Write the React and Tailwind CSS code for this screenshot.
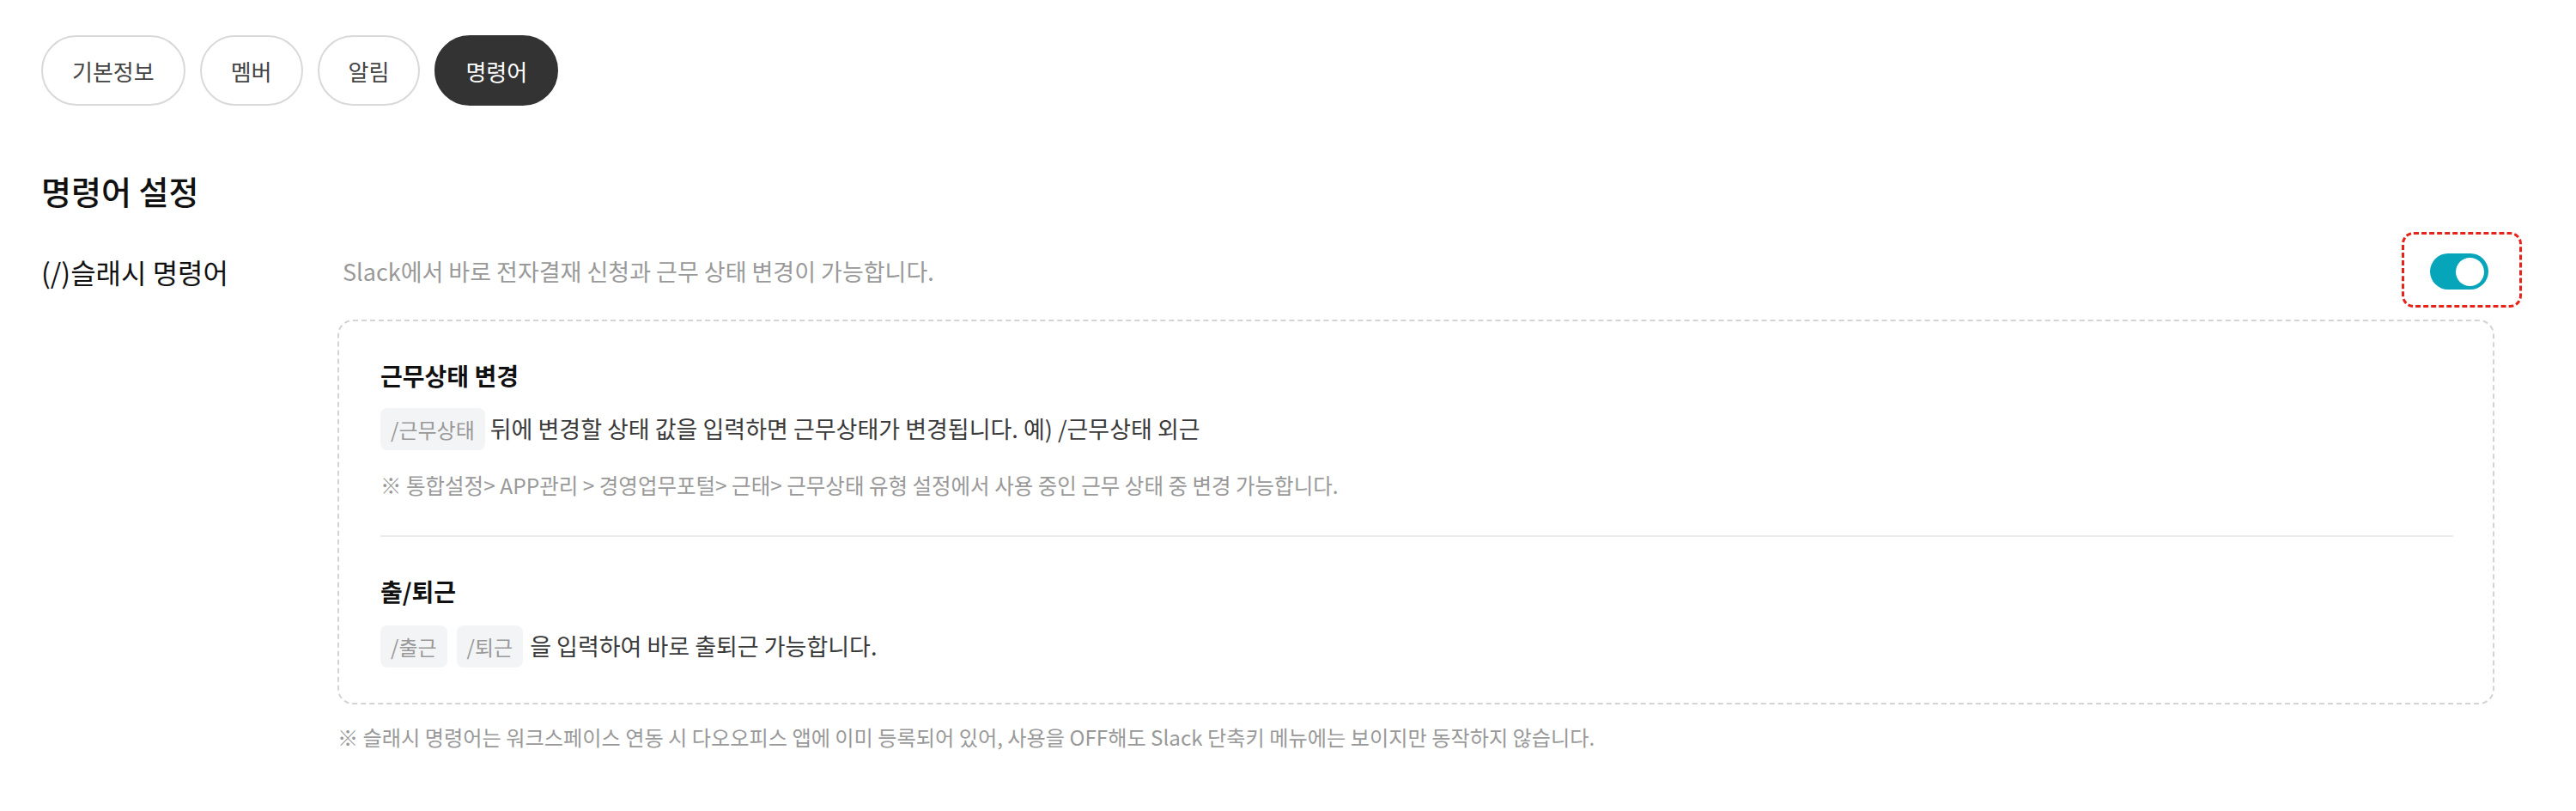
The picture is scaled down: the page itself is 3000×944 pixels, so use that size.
import React, { useState } from 'react'

const tabs = ['기본정보', '멤버', '알림', '명령어']

function Chip({ children }) {
  return (
    <span className="inline-flex h-[49px] items-center rounded-[8px] bg-[#f3f4f6] px-[12px] text-[24px] text-[#999]">
      {children}
    </span>
  )
}

export default function App() {
  const [active, setActive] = useState('명령어')
  const [enabled, setEnabled] = useState(true)

  return (
    <div
      className="min-h-[944px] bg-white pl-[48px] pr-[95px] pt-[41px] text-[#222]"
      style={{ fontFamily: '"Noto Sans CJK KR", "Noto Sans", sans-serif' }}
    >
      {/* Tabs */}
      <div className="flex gap-[17px]">
        {tabs.map((t) => (
          <button
            key={t}
            onClick={() => setActive(t)}
            className={
              t === active
                ? 'h-[82px] rounded-full border-2 border-[#333] bg-[#333] px-[34px] text-[26px] text-white'
                : 'h-[82px] rounded-full border-2 border-[#d9d9d9] bg-white px-[34px] text-[26px] text-[#444]'
            }
          >
            {t}
          </button>
        ))}
      </div>

      <h2 className="mt-[74px] text-[38px] font-medium leading-[50px] text-[#111]">명령어 설정</h2>

      {/* Slash command setting */}
      <div className="mt-[44px] grid grid-cols-[345px_1fr]">
        <div className="text-[32px] leading-[50px] text-[#111]">(/)슬래시 명령어</div>

        <div>
          <div className="flex h-[50px] items-center justify-between">
            <p className="pl-[6px] text-[27px] text-[#999]">
              Slack에서 바로 전자결재 신청과 근무 상태 변경이 가능합니다.
            </p>
            <div className="relative mr-[7px]">
              <button
                onClick={() => setEnabled(!enabled)}
                className={
                  enabled
                    ? 'flex h-[42px] w-[68px] items-center justify-end rounded-full bg-[#07a5ba] px-[5px]'
                    : 'flex h-[42px] w-[68px] items-center justify-start rounded-full bg-[#ccc] px-[5px]'
                }
              >
                <span className="h-[33px] w-[33px] rounded-full bg-white" />
              </button>
              {/* highlight marker */}
              <div className="pointer-events-none absolute -bottom-[21px] -left-[33px] -right-[39px] -top-[25px] rounded-[14px] border-[3px] border-dashed border-[#e5231b]" />
            </div>
          </div>

          <div className="mt-[31px] rounded-[18px] border-2 border-dashed border-[#d3d3d8] px-[48px] pb-[41px] pt-[43px]">
            <h3 className="text-[28px] font-bold leading-[40px] text-[#111]">근무상태 변경</h3>
            <div className="mt-[18px] flex items-center gap-[6px]">
              <Chip>/근무상태</Chip>
              <span className="text-[27px] text-[#3a3a3a]">
                뒤에 변경할 상태 값을 입력하면 근무상태가 변경됩니다. 예) /근무상태 외근
              </span>
            </div>
            <p className="mt-[25px] text-[24.5px] leading-[32px] text-[#999]">
              ※ 통합설정&gt; APP관리 &gt; 경영업무포털&gt; 근태&gt; 근무상태 유형 설정에서 사용 중인 근무 상태 중 변경 가능합니다.
            </p>

            <div className="mr-[-2px] mt-[42px] h-[2px] bg-[#ececf0]" />

            <h3 className="mt-[43px] text-[28px] font-bold leading-[40px] text-[#111]">출/퇴근</h3>
            <div className="mt-[20px] flex items-center gap-[11px]">
              <Chip>/출근</Chip>
              <Chip>/퇴근</Chip>
              <span className="-ml-[3px] text-[27px] text-[#3a3a3a]">을 입력하여 바로 출퇴근 가능합니다.</span>
            </div>
          </div>

          <p className="mt-[22px] text-[24.2px] leading-[32px] text-[#999]">
            ※ 슬래시 명령어는 워크스페이스 연동 시 다오오피스 앱에 이미 등록되어 있어, 사용을 OFF해도 Slack 단축키 메뉴에는 보이지만 동작하지 않습니다.
          </p>
        </div>
      </div>
    </div>
  )
}
